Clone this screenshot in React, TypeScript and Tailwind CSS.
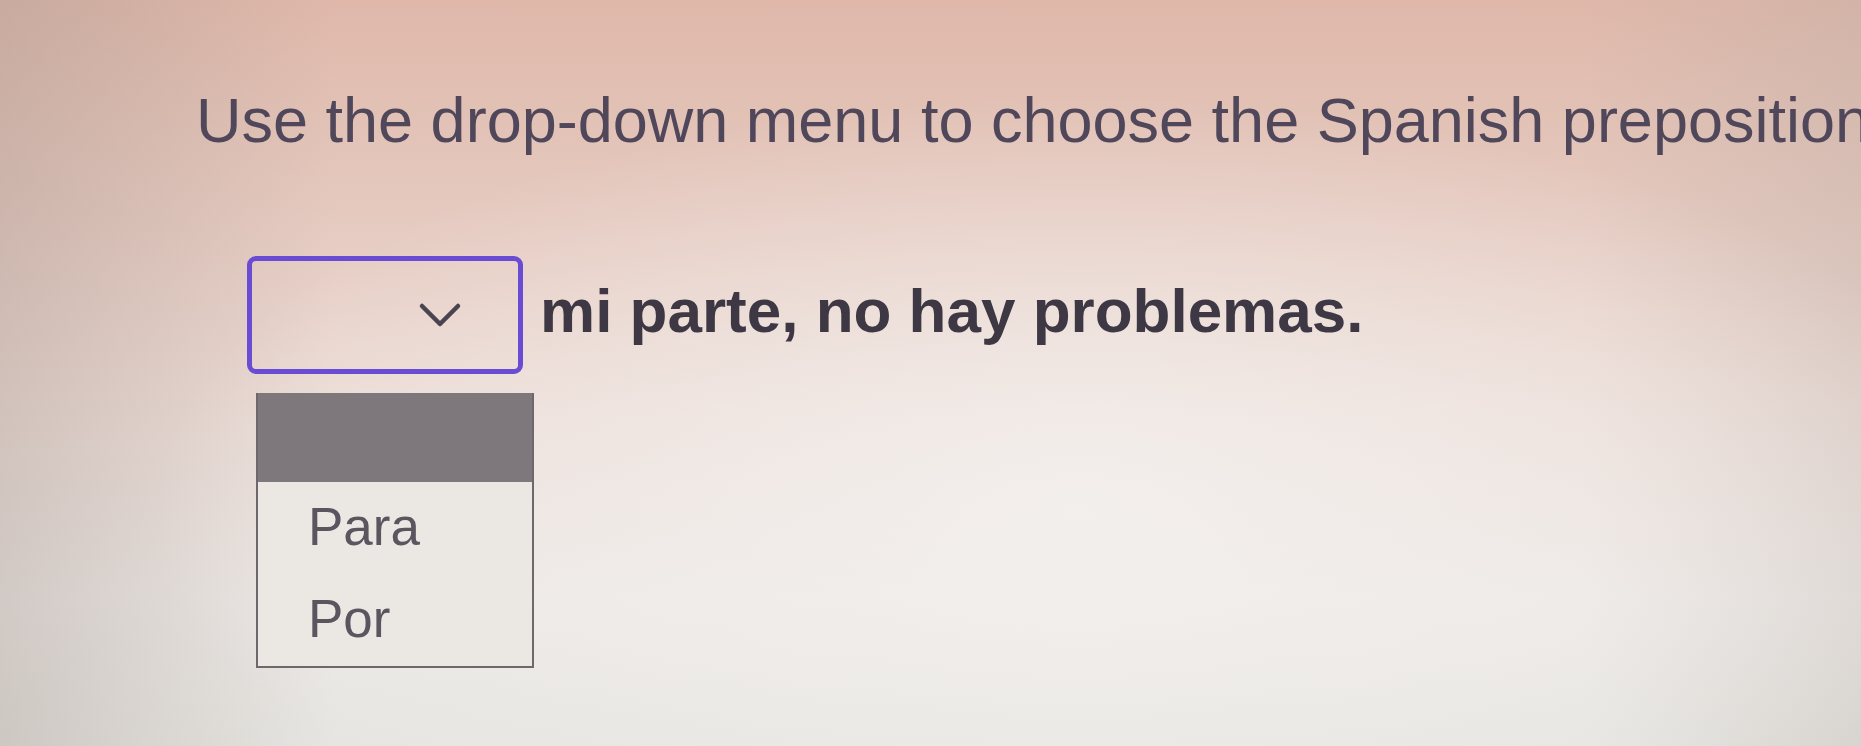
import React from 'react';

// Photo of a quiz question with an open drop-down (Para / Por)

const options = ['Para', 'Por'];

function Chevron() {
  return (
    <svg width="44" height="28" viewBox="0 0 44 28" fill="none" stroke="#4a4350" strokeWidth={4.5} strokeLinecap="round" strokeLinejoin="round">
      <polyline points="4,5 22,23 40,5" />
    </svg>
  );
}

export default function App() {
  return (
    <div className="h-screen w-full overflow-hidden font-['Liberation_Sans',Arial,sans-serif] bg-[radial-gradient(ellipse_50%_55%_at_58%_68%,rgba(244,241,239,0.85)_0%,rgba(244,241,239,0)_100%),linear-gradient(90deg,rgba(160,145,138,0.35)_0%,rgba(160,145,138,0)_18%,rgba(160,145,138,0)_85%,rgba(175,165,158,0.25)_100%),linear-gradient(180deg,#dfb8aa_0%,#e5c9bf_28%,#ecdcd6_55%,#ece8e5_80%,#e6e5e1_100%)]">
      <h1 className="pl-[196px] pt-[89px] text-[63px] leading-none font-normal whitespace-nowrap text-[#50475a]">
        Use the drop-down menu to choose the Spanish preposition
      </h1>

      <div className="mt-[104px] pl-[247px] flex items-start">
        <div className="w-[276px] h-[118px] rounded-[9px] border-[5px] border-[#6a4bd4] flex items-center justify-end pr-[56px]">
          <Chevron />
        </div>
        <p className="ml-[17px] pt-[24px] text-[62px] leading-none font-bold whitespace-nowrap text-[#3e3845]">
          mi parte, no hay problemas.
        </p>
      </div>

      <div className="mt-[19px] ml-[256px] w-[278px] border-x-2 border-b-2 border-[#6e686c] bg-[#ebe7e3]">
        <div className="h-[89px] bg-[#7e777b]" />
        {options.map((o) => (
          <div key={o} className="h-[92px] pt-[18px] pl-[50px] text-[53px] leading-none text-[#5b5560]">
            {o}
          </div>
        ))}
      </div>
    </div>
  );
}
